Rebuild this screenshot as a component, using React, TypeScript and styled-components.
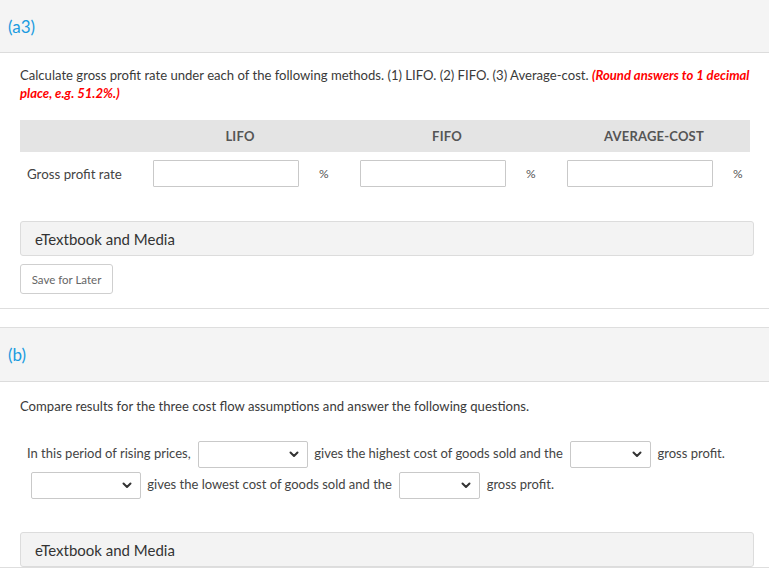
import React from "react";
import styled, { createGlobalStyle } from "styled-components";

const GlobalStyle = createGlobalStyle`
  html, body { margin: 0; padding: 0; background: #fff; }
  body { font-family: Lato, "Open Sans", sans-serif; color: #333; }
`;

const Page = styled.div`
  width: 769px;
`;

const Section = styled.section<{ $top?: boolean }>`
  border-bottom: 1px solid #dedede;
  ${(p) => (p.$top ? "" : "margin-top: 18px; border-top: 1px solid #dedede;")}
`;

const SectionHeader = styled.div<{ $h: number }>`
  height: ${(p) => p.$h}px;
  background: #f4f4f4;
  border-bottom: 1px solid #dcdcdc;
  display: flex;
  align-items: center;
  padding-left: 8px;
  font-size: 17px;
  color: #1a9be0;
`;

const Body = styled.div<{ $pt: number; $pb: number }>`
  padding: ${(p) => p.$pt}px 15px ${(p) => p.$pb}px 20px;
`;

const Prompt = styled.p`
  margin: 0;
  font-size: 13.1px;
  line-height: 18px;
  color: #3a3a3a;
`;

const Red = styled.span`
  color: #f00;
  font-weight: 700;
  font-style: italic;
`;

const Table = styled.div`
  margin-top: 18px;
  width: 730px;
`;

const HeadRow = styled.div`
  display: grid;
  grid-template-columns: 100px 174px 174px 174px;
  column-gap: 33px;
  height: 32px;
  background: #e4e4e4;
  align-items: center;
`;

const HeadCell = styled.div`
  text-align: center;
  font-size: 13px;
  font-weight: 700;
  color: #555;
  letter-spacing: 0.2px;
`;

const DataRow = styled.div`
  display: grid;
  grid-template-columns: 133px 146px 61px 146px 61px 146px 37px;
  align-items: center;
  height: 43px;
`;

const RowLabel = styled.div`
  font-size: 13.3px;
  color: #444;
  padding-left: 7px;
`;

const TextInput = styled.input`
  box-sizing: border-box;
  width: 146px;
  height: 27px;
  border: 1px solid #c9c9c9;
  border-radius: 1px;
  background: #fff;
  margin: 0;
  padding: 0 6px;
  outline: none;
`;

const Pct = styled.div<{ $pl: number }>`
  font-size: 12px;
  color: #555;
  padding-left: ${(p) => p.$pl}px;
`;

const MediaBar = styled.div<{ $mt: number }>`
  box-sizing: border-box;
  margin-top: ${(p) => p.$mt}px;
  width: 734px;
  height: 35px;
  background: #f3f3f3;
  border: 1px solid #dcdcdc;
  border-radius: 3px;
  display: flex;
  align-items: center;
  padding-left: 14px;
  font-size: 15px;
  color: #333;
`;

const SaveButton = styled.button`
  box-sizing: border-box;
  margin-top: 8px;
  width: 93px;
  height: 30px;
  background: #fff;
  border: 1px solid #cfcfcf;
  border-radius: 3px;
  font-family: Lato, sans-serif;
  font-size: 11.5px;
  color: #666;
  padding: 0;
  display: block;
`;

const Fill = styled.div`
  margin-top: 23px;
  padding-left: 7px;
  font-size: 13px;
  line-height: 31px;
  color: #444;
  width: 730px;
`;

const SelectBox = styled.span<{ $w: number }>`
  box-sizing: border-box;
  display: inline-flex;
  vertical-align: middle;
  align-items: center;
  justify-content: flex-end;
  width: ${(p) => p.$w}px;
  height: 27px;
  margin: 0 3px 0 4px;
  border: 1px solid #c9c9c9;
  border-radius: 2px;
  background: #fff;
  padding-right: 8px;
`;

const Chevron = () => (
  <svg width="10" height="7" viewBox="0 0 10 7">
    <polyline points="1.5,1.5 5,5 8.5,1.5" fill="none" stroke="#333" strokeWidth="2" strokeLinecap="round" strokeLinejoin="round" />
  </svg>
);

const Select = ({ w }: { w: number }) => (
  <SelectBox $w={w}>
    <Chevron />
  </SelectBox>
);

export default function App() {
  return (
    <Page>
      <GlobalStyle />
      <Section $top>
        <SectionHeader $h={52}>(a3)</SectionHeader>
        <Body $pt={13} $pb={14}>
          <Prompt>
            Calculate gross profit rate under each of the following methods. (1) LIFO. (2) FIFO. (3) Average-cost.{" "}
            <Red>(Round answers to 1 decimal place, e.g. 51.2%.)</Red>
          </Prompt>
          <Table>
            <HeadRow>
              <div />
              <HeadCell>LIFO</HeadCell>
              <HeadCell>FIFO</HeadCell>
              <HeadCell>AVERAGE-COST</HeadCell>
            </HeadRow>
            <DataRow>
              <RowLabel>Gross profit rate</RowLabel>
              <TextInput />
              <Pct $pl={20}>%</Pct>
              <TextInput />
              <Pct $pl={20}>%</Pct>
              <TextInput />
              <Pct $pl={20}>%</Pct>
            </DataRow>
          </Table>
          <MediaBar $mt={26}>eTextbook and Media</MediaBar>
          <SaveButton>Save for Later</SaveButton>
        </Body>
      </Section>
      <Section>
        <SectionHeader $h={53}>(b)</SectionHeader>
        <Body $pt={15} $pb={0}>
          <Prompt>Compare results for the three cost flow assumptions and answer the following questions.</Prompt>
          <Fill>
            In this period of rising prices,{" "}
            <Select w={110} />{" "}
            gives the highest cost of goods sold and the{" "}
            <Select w={81} />{" "}
            gross profit.{" "}
            <Select w={110} />{" "}
            gives the lowest cost of goods sold and the{" "}
            <Select w={81} />{" "}
            gross profit.
          </Fill>
          <MediaBar $mt={32}>eTextbook and Media</MediaBar>
        </Body>
      </Section>
    </Page>
  );
}
